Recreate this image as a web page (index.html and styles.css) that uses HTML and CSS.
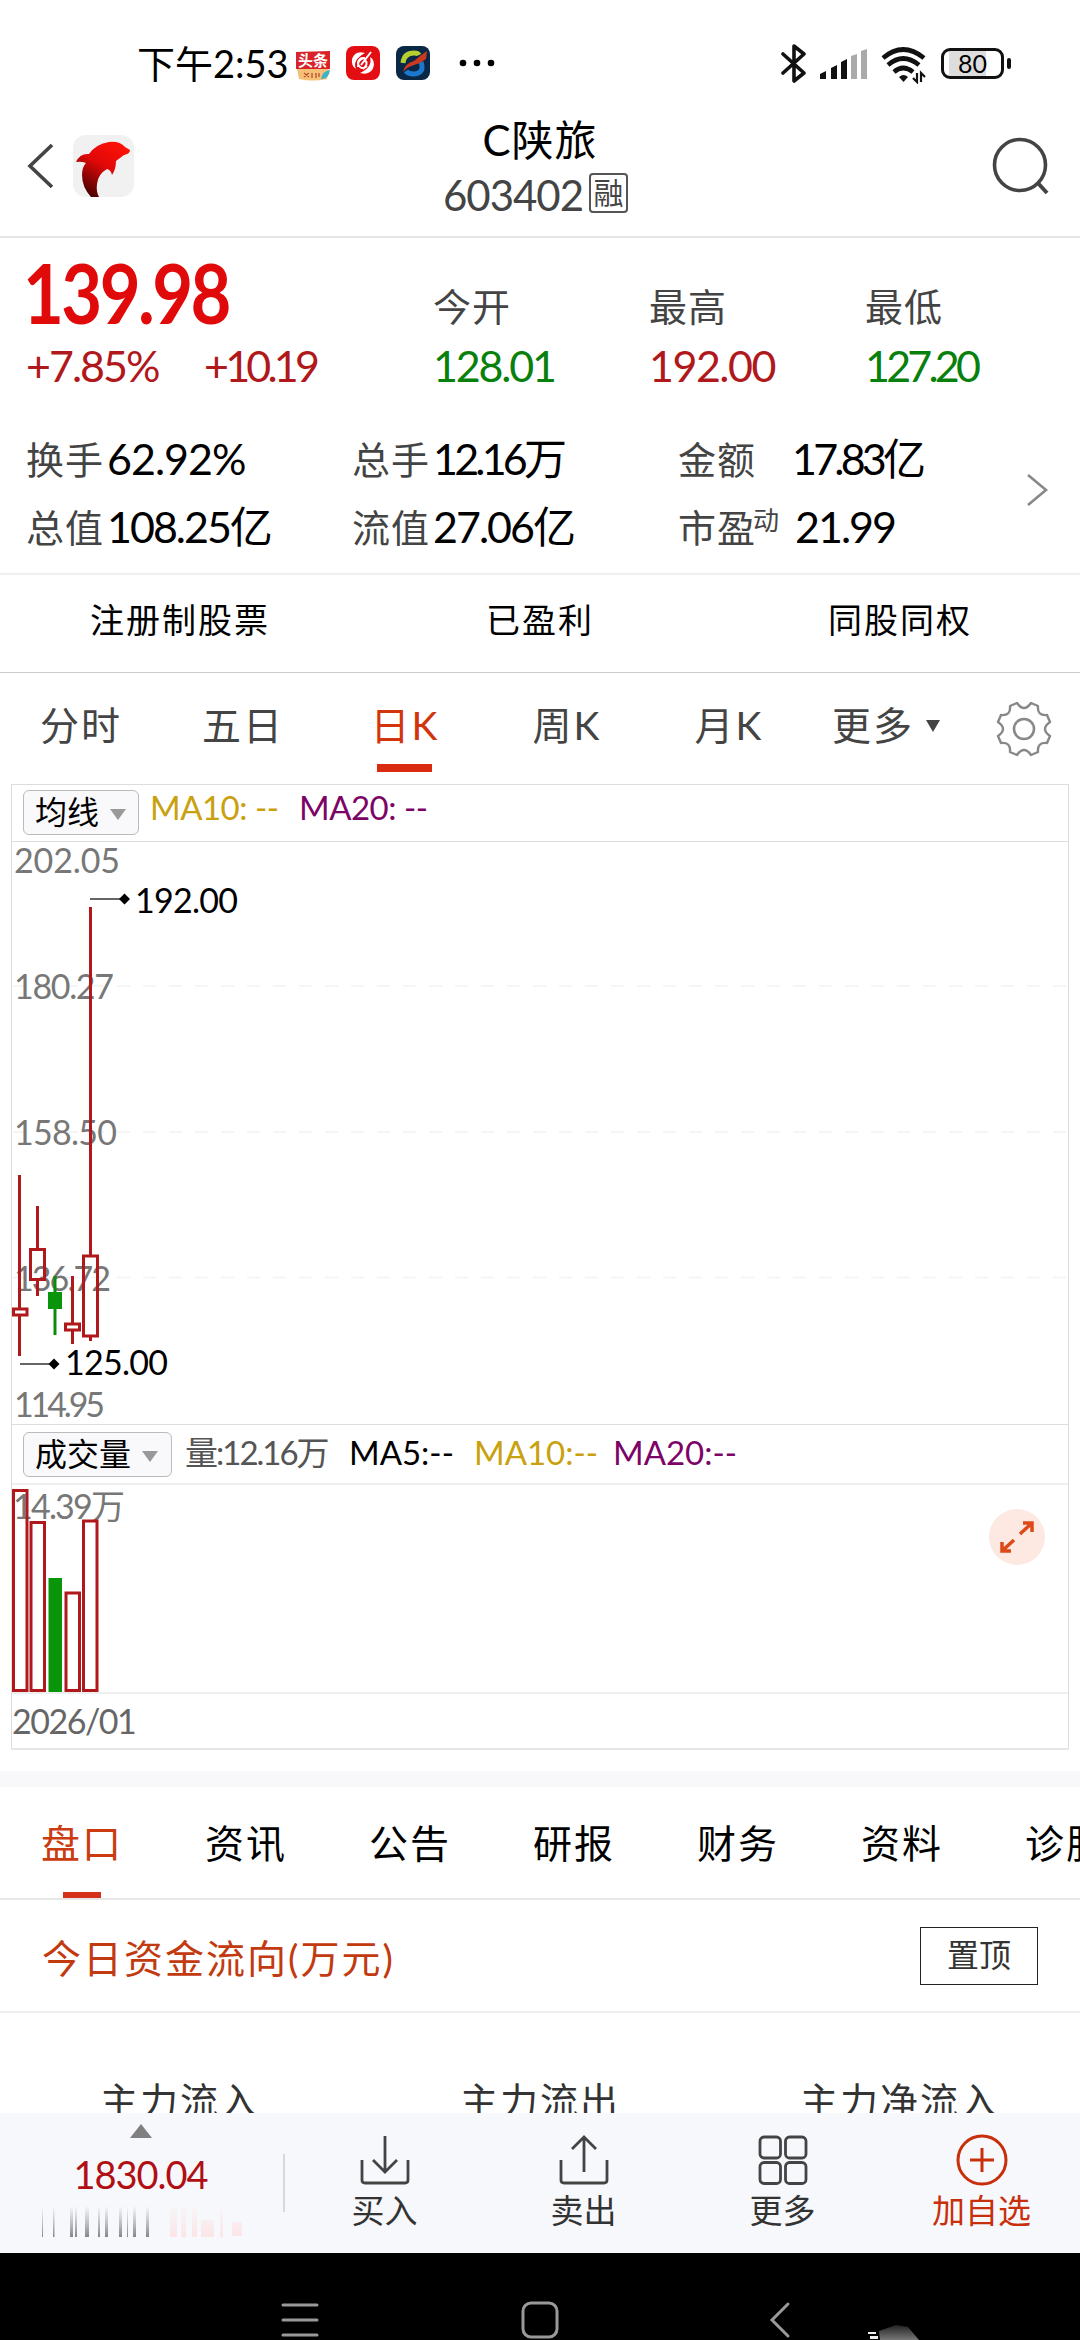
FILE: index.html
```html
<!DOCTYPE html>
<html lang="zh-CN">
<head>
<meta charset="UTF-8">
<meta name="viewport" content="width=device-width, initial-scale=1.0">
<title>C陕旅 603402</title>
<link rel="stylesheet" href="styles.css">
</head>
<body>
<div class="status-bar">
    <span class="time">下午2:53</span>
    <svg class="app-icon" width="34" height="36" viewBox="0 0 34 36">
        <path d="M0 7 L34 6 V24 H0 Z" fill="#d8232a"/>
        <path d="M1 24 H33 L31 34 Q17 37 3 34 Z" fill="#f6c078"/>
        <path d="M25 34 Q26 26 34 25 Q33 34 25 34 Z" fill="#3fb3c4"/>
        <text class="app-name" x="17" y="21" text-anchor="middle">头条</text>
        <path d="M8 28l5 4M13 28l-5 4M16 28v5M20 28v5M23 28v4" stroke="#b5522c" stroke-width="1.3"/>
    </svg>
    <svg class="app-icon" width="34" height="36" viewBox="0 0 34 36">
        <rect y="1" width="34" height="34" rx="8" fill="#e40d12"/>
        <path d="M19 8 Q9 5 6 14 Q5 21 10 24 Q6 15 19 8 Z M14 28 Q26 31 28 20 Q28 14 24 12 Q27 22 14 28 Z" fill="#fff"/>
        <path d="M25 7 L15 20 M20 14 a5 5 0 1 0 1 7 M12 22 q-1-8 7-9 M19 15 q4 4-2 9" stroke="#fff" stroke-width="2" fill="none"/>
    </svg>
    <svg class="app-icon" width="34" height="36" viewBox="0 0 34 36">
        <rect y="1" width="34" height="34" rx="8" fill="#0b2746"/>
        <path d="M7 18 Q8 8 18 8 Q22 8 23 10" stroke="#b4cf2f" stroke-width="5" fill="none"/>
        <path d="M25 17 Q29 28 18 29 Q12 29 10 26" stroke="#1c78cc" stroke-width="5" fill="none"/>
        <path d="M7 27 Q9 18 18 16 L24 11 L31 6 L30 14 L24 18 L18 20 Q11 22 7 27 Z" fill="#c93a20"/>
    </svg>
    <svg class="dots" width="36" height="10" viewBox="0 0 36 10">
        <circle cx="4" cy="5" r="3.3"/><circle cx="18" cy="5" r="3.3"/><circle cx="32" cy="5" r="3.3"/>
    </svg>
    <svg class="radio" width="150" height="42" viewBox="0 0 150 42">
        <path d="M2 12 L23 31 L13 39 V4 L23 12 L2 31" fill="none" stroke="#111" stroke-width="3.6" stroke-linejoin="round" stroke-linecap="round"/>
        <path d="M39 37v-5l6-3v8zM50 37V26l6-3v14zM60 37V20l6-3v20z" fill="#111"/>
        <path d="M70 37V14l6-2v25zM80 37V9l6-2v30z" fill="#aaa"/>
        <path d="M102 16 Q122 -1 143 16" fill="none" stroke="#111" stroke-width="4.6"/>
        <path d="M107 23 Q122 10 138 23" fill="none" stroke="#111" stroke-width="4.6"/>
        <path d="M113 30 Q122 22 132 30" fill="none" stroke="#111" stroke-width="4.6"/>
        <path d="M118 35q4.500-4 9 0l-4.500 5z" fill="#111"/>
        <path d="M136 31v9l-4-4M140 40v-9l4 4" fill="none" stroke="#111" stroke-width="2.200"/>
    </svg>
    <span class="battery">80</span>
</div>

<div class="header">
    <svg class="back" width="28" height="48" viewBox="0 0 28 48">
        <path d="M25 3 L3 24 L25 45" fill="none" stroke="#444" stroke-width="3.6"/>
    </svg>
    <svg class="logo" width="62" height="62" viewBox="0 0 62 62">
        <defs>
            <linearGradient id="dolphin" x1="0.8" y1="0" x2="0.2" y2="1">
                <stop offset="0" stop-color="#ff1208"/>
                <stop offset="0.450" stop-color="#e00808"/>
                <stop offset="1" stop-color="#3c0000"/>
            </linearGradient>
        </defs>
        <rect width="61" height="62" rx="13" fill="#f1f1f1"/>
        <path d="M3 27 Q7 18 16 19 Q23 9 36 7 Q47 6 52 12 L57 15 Q57 19 51 20 Q47 23 43 26 Q43 34 39 40 Q38 35 34 34 Q25 39 24 49 Q23 57 26 62 H18 Q9 52 9 40 Q9 32 13 28 Q8 26 3 27 Z" fill="url(#dolphin)"/>
    </svg>
    <div class="stock">
        <div class="stock-name">C陕旅</div>
        <div class="stock-code">603402<span class="margin-tag">融</span></div>
    </div>
    <svg class="search" width="60" height="60" viewBox="0 0 60 60">
        <circle cx="29" cy="28" r="25.500" fill="none" stroke="#444" stroke-width="3.600"/>
        <path d="M46 45 L56 56" stroke="#444" stroke-width="4"/>
    </svg>
</div>

<div class="quote">
    <div class="quote-top">
        <div class="last">
            <div class="price">139.98</div>
            <div class="change"><span class="pct">+7.85%</span><span class="tight">+10.19</span></div>
        </div>
        <div class="ohl"><div class="label">今开</div><div class="down">128.01</div></div>
        <div class="ohl"><div class="label">最高</div><div class="up">192.00</div></div>
        <div class="ohl"><div class="label">最低</div><div class="down tight">127.20</div></div>
    </div>
    <div class="detail">
        <div class="item"><span class="label">换手</span><span class="value loose">62.92%</span></div>
        <div class="item"><span class="label">总手</span><span class="value tight">12.16万</span></div>
        <div class="item"><span class="label wide">金额</span><span class="value tight">17.83亿</span></div>
        <div class="item"><span class="label">总值</span><span class="value">108.25亿</span></div>
        <div class="item"><span class="label">流值</span><span class="value">27.06亿</span></div>
        <div class="item"><span class="label wide">市盈<span class="sup">动</span></span><span class="value pe">21.99</span></div>
        <svg class="more-arrow" width="24" height="36" viewBox="0 0 24 36">
            <path d="M3 3 L21 18 L3 33" fill="none" stroke="#888" stroke-width="2.600"/>
        </svg>
    </div>
</div>

<div class="tags">
    <span>注册制股票</span><span>已盈利</span><span>同股同权</span>
</div>

<div class="periods">
    <span class="period">分时</span>
    <span class="period">五日</span>
    <span class="period active">日K</span>
    <span class="period">周K</span>
    <span class="period">月K</span>
    <span class="period">更多<i class="caret"></i></span>
    <svg class="gear" width="60" height="60" viewBox="-30 -30 60 60">
        <path fill="none" stroke="#888" stroke-width="2.400" stroke-linejoin="round" d="M-7 -26 Q0 -16 7 -26 L14 -23 Q13 -13 23 -14 L26 -7 Q16 0 26 7 L23 14 Q13 13 14 23 L7 26 Q0 16 -7 26 L-14 23 Q-13 13 -23 14 L-26 7 Q-16 0 -26 -7 L-23 -14 Q-13 -13 -14 -23 Z"/>
        <circle r="10" fill="none" stroke="#888" stroke-width="2.600"/>
    </svg>
</div>

<div class="chart">
    <div class="chart-head">
        <span class="select select-ma">均线<i class="caret"></i></span>
        <span class="ma10">MA10: --</span>
        <span class="ma20">MA20: --</span>
    </div>
    <svg class="kline" width="1054" height="582" viewBox="12 842 1054 582">
        <g class="grid">
            <path d="M13 986H1067M13 1132H1067M13 1277.500H1067"/>
        </g>
        <g class="axis">
            <text x="14" y="873" textLength="106">202.05</text>
            <text x="14" y="999" textLength="100">180.27</text>
            <text x="14" y="1145" textLength="103">158.50</text>
            <text x="14" y="1291" textLength="97">136.72</text>
            <text x="14" y="1417" textLength="91">114.95</text>
        </g>
        <g class="candle-up">
            <path d="M19.500 1175V1308M19.500 1316V1356M37.500 1206V1249M37.500 1280V1296M72.500 1276V1323M72.500 1331V1344M90.500 907V1255M90.500 1337V1341"/>
            <rect x="13.500" y="1309" width="13.500" height="6"/>
            <rect x="30.500" y="1249.500" width="14" height="30"/>
            <rect x="65.500" y="1324" width="14" height="6"/>
            <rect x="83.500" y="1256" width="14" height="80"/>
        </g>
        <g class="candle-down">
            <path d="M55 1276V1335"/>
            <rect x="48" y="1292" width="14" height="17"/>
        </g>
        <g class="mark">
            <path d="M90 899H120M20 1364H50" stroke="#333" stroke-width="1.500"/>
            <path d="M119 899l5.500-5.500 5.500 5.500-5.500 5.500zM48.500 1364l5.500-5.500 5.500 5.500-5.500 5.500z"/>
            <text x="135" y="913" textLength="103">192.00</text>
            <text x="65" y="1375" textLength="103">125.00</text>
        </g>
    </svg>
    <div class="chart-head vol-head">
        <span class="select select-vol">成交量<i class="caret"></i></span>
        <span class="vol">量:12.16万</span>
        <span class="ma5">MA5:--</span>
        <span class="ma10">MA10:--</span>
        <span class="ma20">MA20:--</span>
    </div>
    <svg class="volume" width="1054" height="207" viewBox="12 1486 1054 207">
        <g class="axis">
            <text x="13" y="1520" textLength="112">14.39万</text>
        </g>
        <g class="candle-up">
            <rect x="13.500" y="1491.500" width="13.500" height="200"/>
            <rect x="31" y="1523.500" width="13.500" height="168"/>
            <rect x="66" y="1594" width="13.500" height="97.500"/>
            <rect x="83.500" y="1522" width="13.500" height="169.500"/>
        </g>
        <g class="candle-down"><rect x="48.500" y="1579" width="13.500" height="114"/></g>
        <g class="expand">
            <circle cx="1017" cy="1538" r="28" fill="#fde9e1"/>
            <path d="M1020 1535L1032 1524M1023 1524H1032V1533M1014 1541L1002 1552M1002 1543V1552H1011"/>
        </g>
    </svg>
    <div class="date">2026/01</div>
</div>

<div class="tabs">
    <span class="tab active">盘口</span>
    <span class="tab">资讯</span>
    <span class="tab">公告</span>
    <span class="tab">研报</span>
    <span class="tab">财务</span>
    <span class="tab">资料</span>
    <span class="tab">诊股</span>
</div>

<div class="section-title">
    <span>今日资金流向(万元)</span>
    <span class="pin">置顶</span>
</div>

<div class="flow">
    <span>主力流入</span><span>主力流出</span><span>主力净流入</span>
</div>

<div class="toolbar">
    <div class="index">
        <i class="up-caret"></i>
        <span class="index-value">1830.04</span>
        <svg class="ticker" width="206" height="32" viewBox="0 0 206 32">
            <defs>
                <linearGradient id="fade" x1="0" y1="0" x2="0" y2="1">
                    <stop offset="0" stop-color="#777" stop-opacity="0.050"/>
                    <stop offset="1" stop-color="#555"/>
                </linearGradient>
                <linearGradient id="fade-red" x1="0" y1="0" x2="0" y2="1">
                    <stop offset="0" stop-color="#ffdcdc" stop-opacity="0.200"/>
                    <stop offset="1" stop-color="#ffd8d8"/>
                </linearGradient>
            </defs>
            <path fill="url(#fade)" opacity="0.700" d="M4 1h1v30h-1zM15 1h1.500v30h-1.500zM32 1h3v30h-3zM37 1h2v30h-2zM47 1h4v30h-4zM60 1h2v30h-2zM67 1h3v30h-3zM81 1h3v30h-3zM89 1h1v30h-1zM95 1h3v30h-3zM108 1h3v30h-3z"/>
            <path fill="url(#fade-red)" opacity="0.600" d="M132 1h7v30h-7zM143 1h5v30h-5zM154 1h5v30h-5zM163 14h13v17h-13zM182 3h3v28h-3zM194 16h10v14h-10z"/>
        </svg>
    </div>
    <div class="action">
        <svg width="52" height="52" viewBox="0 0 52 52">
            <path d="M3 26V46Q3 49 6 49H46Q49 49 49 46V26M26 2V38M14 26L26 38L38 26"/>
        </svg>
        <span>买入</span>
    </div>
    <div class="action">
        <svg width="52" height="52" viewBox="0 0 52 52">
            <path d="M3 26V46Q3 49 6 49H46Q49 49 49 46V26M26 38V3M14 15L26 3L38 15"/>
        </svg>
        <span>卖出</span>
    </div>
    <div class="action">
        <svg width="52" height="52" viewBox="0 0 52 52">
            <rect x="3" y="3" width="20.500" height="21" rx="4"/><rect x="28.500" y="3" width="20.500" height="21" rx="4"/>
            <rect x="3" y="28.500" width="20.500" height="21" rx="4"/><rect x="28.500" y="28.500" width="20.500" height="21" rx="4"/>
        </svg>
        <span>更多</span>
    </div>
    <div class="action add">
        <svg width="52" height="52" viewBox="0 0 52 52">
            <circle cx="26" cy="26" r="24"/><path d="M26 14V38M14 26H38"/>
        </svg>
        <span>加自选</span>
    </div>
</div>

<div class="nav-bar">
    <svg width="1080" height="87" viewBox="0 2253 1080 87">
        <defs>
            <linearGradient id="smudge" x1="0" y1="0" x2="0" y2="1">
                <stop offset="0" stop-color="#222"/>
                <stop offset="1" stop-color="#777"/>
            </linearGradient>
        </defs>
        <path class="nav" d="M283 2305H317M283 2320H317M283 2335H317"/>
        <rect class="nav" x="523" y="2303" width="34" height="34" rx="8"/>
        <path class="nav" d="M788 2304L772 2320L788 2336"/>
        <path d="M868 2332h8v2h-8zM870 2336h8v3h-8z" fill="#eee"/>
        <path d="M879 2331L896 2325L908 2327L919 2340H880Z" fill="url(#smudge)"/>
    </svg>
</div>
</body>
</html>
```
FILE: styles.css
```css
* {
    box-sizing: border-box;
}

body {
    margin: 0;
    width: 1080px;
    height: 2340px;
    overflow: hidden;
    background-color: #fff;
    color: #000;
    font-family: Lato, "Noto Sans CJK SC", sans-serif;
    font-size: 38px;
}

svg {
    display: block;
    flex: none;
}

/* status bar */
.status-bar {
    display: flex;
    align-items: center;
    height: 90px;
    padding: 36px 76px 0 137px;
}

.time {
    width: 159px;
    font-size: 38px;
    line-height: 54px;
    white-space: nowrap;
}

.app-icon {
    margin-right: 16px;
}

.app-name {
    font-size: 15px;
    font-weight: bold;
    fill: #fff;
}

.dots {
    margin-left: 13px;
}

.radio {
    margin-left: auto;
    margin-right: 10px;
}

.battery {
    position: relative;
    width: 63px;
    height: 31px;
    border: 3px solid #111;
    border-radius: 9px;
    background: linear-gradient(90deg, #fff 5px, #ddd 5px, #ddd 42px, #fff 42px);
    font-size: 25px;
    line-height: 25px;
    text-align: center;
}

.battery::after {
    content: "";
    position: absolute;
    right: -10px;
    top: 7px;
    width: 4px;
    height: 11px;
    border-radius: 2px;
    background-color: #111;
}

/* header */
.header {
    display: flex;
    align-items: center;
    height: 148px;
    padding: 5px 29px 0 27px;
    border-bottom: 2px solid #e6e6e6;
}

.logo {
    margin-left: 18px;
}

.stock {
    flex: 1;
    text-align: center;
    padding-right: 46px;
}

.stock-name {
    font-size: 42px;
    line-height: 56px;
    letter-spacing: 1px;
}

.stock-code {
    display: flex;
    justify-content: center;
    align-items: center;
    margin: 2px 0 0 -9px;
    font-size: 42px;
    line-height: 50px;
    letter-spacing: -1px;
    color: #444;
}

.margin-tag {
    width: 39px;
    height: 40px;
    margin: -4px 0 0 6px;
    border: 2px solid #555;
    border-radius: 4px;
    font-size: 30px;
    line-height: 34px;
    letter-spacing: 0;
}

.search {
    margin-top: 3px;
}

/* quote */
.quote {
    height: 337px;
    padding: 14px 26px 0;
    border-bottom: 2px solid #f0f0f0;
}

.quote-top {
    display: flex;
    height: 170px;
}

.last {
    flex: none;
    width: 407px;
}

.price {
    font-size: 82px;
    line-height: 80px;
    font-weight: bold;
    letter-spacing: -3px;
    color: #e00a0a;
    transform: translateX(-3px) scaleX(0.86);
    transform-origin: left;
}

.change {
    display: flex;
    margin-top: 4px;
    font-size: 43px;
    line-height: 60px;
    letter-spacing: -2px;
    color: #b0181c;
}

.pct {
    width: 178px;
}

.ohl {
    flex: none;
    width: 216px;
    padding-top: 24px;
    font-size: 43px;
    line-height: 60px;
    letter-spacing: -2.2px;
}

.up {
    color: #b0181c;
    letter-spacing: -1.5px;
}

.down {
    color: #08800c;
}

.tight,
.value.tight {
    letter-spacing: -3.8px;
}

.label {
    font-size: 38px;
    letter-spacing: 1px;
    color: #444;
}

.detail {
    position: relative;
    display: grid;
    grid-template-columns: repeat(3, 326px);
    grid-auto-rows: 68px;
    padding-top: 3px;
}

.item {
    display: flex;
    line-height: 68px;
    white-space: nowrap;
}

.item .label {
    width: 81px;
}

.item .label.wide {
    width: 114px;
}

.value {
    font-size: 43px;
    letter-spacing: -2px;
}

.value.loose {
    letter-spacing: -1px;
}

.value.pe {
    margin-left: 3px;
}

.sup {
    font-size: 26px;
    position: relative;
    top: -12px;
    left: -3px;
}

.more-arrow {
    position: absolute;
    right: 5px;
    top: 50px;
}

.tags {
    display: flex;
    height: 98px;
    border-bottom: 1px solid #ccc;
    font-size: 34px;
    line-height: 90px;
    letter-spacing: 2px;
}

.tags span {
    flex: 1;
    text-align: center;
}

/* period tabs */
.periods {
    display: flex;
    align-items: center;
    height: 111px;
    padding-right: 26px;
    font-size: 39px;
    letter-spacing: 2px;
    color: #444;
}

.period {
    position: relative;
    flex: none;
    width: 162px;
    height: 111px;
    line-height: 105px;
    text-align: center;
    white-space: nowrap;
}

.periods .period:nth-child(6) {
    width: 152px;
}

.period.active {
    color: #d2350e;
}

.period.active::after {
    content: "";
    position: absolute;
    left: 53px;
    bottom: 12px;
    width: 55px;
    height: 8px;
    background-color: #d92b10;
}

.caret {
    display: inline-block;
    border: 8px solid transparent;
    border-top: 11px solid #999;
    border-bottom: 0;
    margin-left: 11px;
    vertical-align: 4px;
}

.period .caret {
    border-width: 12px 7px 0;
    border-top-color: #444;
    margin-left: 12px;
    vertical-align: 8px;
}

.gear {
    margin-left: auto;
}

/* chart */
.chart {
    height: 966px;
    margin: 0 11px 21px 11px;
    border: 1px solid #ddd;
    border-bottom: 2px solid #e6e6e6;
}

.chart-head {
    display: flex;
    height: 57px;
    padding-left: 11px;
    border-bottom: 1px solid #ddd;
    font-size: 33px;
    line-height: 44px;
    letter-spacing: -0.5px;
    white-space: nowrap;
}

.select {
    flex: none;
    height: 45px;
    margin-top: 5px;
    padding-left: 11px;
    border: 1px solid #bbb;
    border-radius: 6px;
    background-color: #f9f9fb;
    font-size: 32px;
    line-height: 42px;
    letter-spacing: 0;
}

.select-ma {
    width: 116px;
}

.select-vol {
    width: 149px;
}

.ma10 {
    color: #c9a00e;
}

.ma20 {
    color: #7c0468;
}

.chart-head .ma10 {
    width: 149px;
    margin-left: 11px;
}

.kline,
.volume {
    overflow: visible;
}

.kline text,
.volume text {
    font-size: 34px;
}

.axis {
    fill: #777;
}

.grid {
    stroke: #f2f2f2;
    stroke-width: 1.5;
    stroke-dasharray: 13 13;
}

.candle-up {
    fill: none;
    stroke: #b0181c;
    stroke-width: 3;
}

.candle-down path {
    stroke: #0a8c0a;
    stroke-width: 3;
}

.candle-down rect {
    fill: #0a940a;
}

.vol-head {
    height: 61px;
    border-top: 1px solid #ddd;
    border-bottom: 2px solid #eee;
    line-height: 54px;
}

.vol-head .select {
    margin-top: 7px;
}

.vol {
    width: 164px;
    margin-left: 13px;
    color: #555;
    letter-spacing: -2px;
}

.ma5 {
    width: 125px;
}

.vol-head .ma10 {
    width: 139px;
    margin-left: 0;
}

.vol-head .ma5,
.vol-head .ma10,
.vol-head .ma20 {
    letter-spacing: 0;
}

.expand path {
    fill: none;
    stroke: #dd4a18;
    stroke-width: 3.5;
}

.date {
    height: 56px;
    border-top: 2px solid #eee;
    font-size: 34px;
    line-height: 54px;
    letter-spacing: -1.5px;
    color: #666;
}

/* info tabs */
.tabs {
    display: flex;
    height: 129px;
    border-top: 16px solid #f8f8fb;
    border-bottom: 2px solid #e8e8e8;
    overflow: hidden;
    font-size: 39px;
    letter-spacing: 2px;
}

.tab {
    position: relative;
    flex: none;
    width: 164px;
    height: 113px;
    line-height: 112px;
    text-align: center;
}

.tab.active {
    color: #cc3a10;
}

.tab.active::after {
    content: "";
    position: absolute;
    left: 63px;
    bottom: 2px;
    width: 38px;
    height: 6px;
    background-color: #d5301a;
}

.section-title {
    display: flex;
    justify-content: space-between;
    align-items: center;
    height: 113px;
    padding: 0 42px;
    border-bottom: 2px solid #eee;
    font-size: 39px;
    letter-spacing: 2px;
    color: #c23a10;
}

.pin {
    width: 118px;
    height: 58px;
    border: 1px solid #222;
    font-size: 32px;
    line-height: 54px;
    letter-spacing: 0;
    text-align: center;
    color: #333;
}

.flow {
    display: flex;
    height: 100px;
    padding-top: 57px;
    overflow: hidden;
    font-size: 38px;
    line-height: 60px;
    letter-spacing: 2px;
    color: #333;
}

.flow span {
    flex: 1;
    text-align: center;
}

/* bottom toolbar */
.toolbar {
    display: flex;
    height: 140px;
    background-color: #f7f8fc;
}

.index {
    display: flex;
    flex-direction: column;
    align-items: center;
    flex: none;
    width: 285px;
    padding: 11px 4px 0 0;
    background: linear-gradient(#d8d8dc, #d8d8dc) right 41px / 2px 58px no-repeat;
}

.up-caret {
    border: 11px solid transparent;
    border-bottom: 14px solid #808080;
    border-top: 0;
}

.index-value {
    margin-top: 12px;
    font-size: 38px;
    line-height: 48px;
    letter-spacing: -1px;
    color: #b01014;
}

.ticker {
    margin-top: 8px;
}

.action {
    display: flex;
    flex-direction: column;
    align-items: center;
    flex: none;
    width: 199px;
    padding-top: 21px;
    font-size: 33px;
    line-height: 48px;
    color: #333;
}

.action svg {
    fill: none;
    stroke: #444;
    stroke-width: 2.8;
}

.add {
    color: #c8300c;
}

.add svg {
    stroke: #c8300c;
    stroke-width: 3;
}

.nav-bar {
    height: 87px;
    background-color: #000;
}

.nav {
    fill: none;
    stroke: #999;
    stroke-width: 3;
    stroke-linecap: round;
}
```
